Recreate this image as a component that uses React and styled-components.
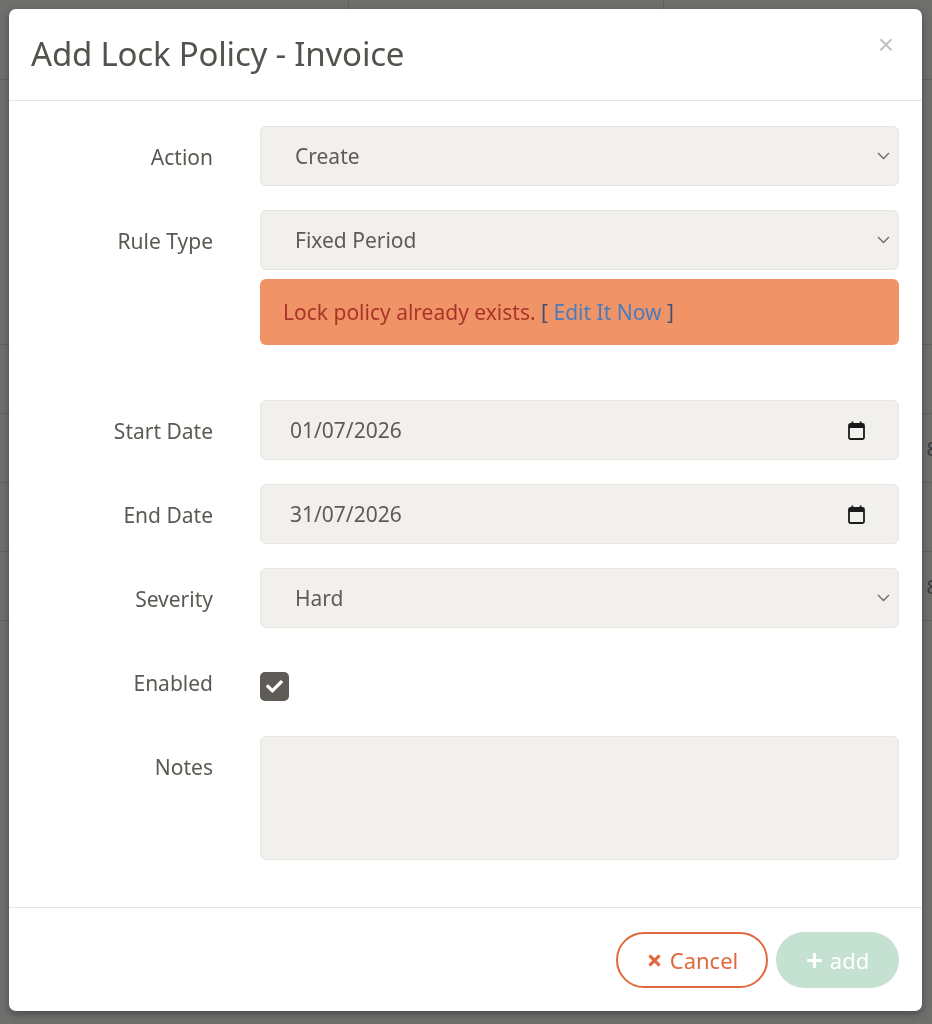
import styled, { createGlobalStyle } from "styled-components";
import { FaCheck, FaTimes, FaPlus } from "react-icons/fa";

const GlobalStyle = createGlobalStyle`
  html, body {
    margin: 0;
    padding: 0;
    background: #6f6f6e;
    font-family: "Noto Sans", "Lato", sans-serif;
  }
  * { box-sizing: border-box; }
`;

const Chevron = () => (
  <svg width="13" height="8" viewBox="0 0 13 8" fill="none">
    <polyline points="1,1 6.5,6.5 12,1" stroke="#6b6864" strokeWidth="1.3" />
  </svg>
);

const CalendarIcon = () => (
  <svg width="17" height="19" viewBox="0 0 17 19" fill="none">
    <rect x="1" y="3" width="15" height="15" rx="1.5" stroke="#1a1a1a" strokeWidth="1.8" />
    <rect x="1" y="3" width="15" height="4" fill="#1a1a1a" />
    <rect x="3.5" y="0.5" width="1.8" height="4" fill="#1a1a1a" />
    <rect x="11.7" y="0.5" width="1.8" height="4" fill="#1a1a1a" />
  </svg>
);

const App = () => {
  return (
    <>
      <GlobalStyle />
      <Page>
        <TopBar>
          <Brand>Demo Fitness Studio</Brand>
          <NavCell />
          <NavCell />
        </TopBar>
        <Table>
          {[0, 1, 2, 3, 4].map((i) => (
            <TableRow key={i}>{i === 1 || i === 3 ? "8" : ""}</TableRow>
          ))}
        </Table>
      </Page>

      <Overlay>
        <Modal>
          <Header>
            <Title>Add Lock Policy - Invoice</Title>
            <Close>×</Close>
          </Header>

          <Body>
            <Row>
              <Label>Action</Label>
              <Field>
                <span>Create</span>
                <Chevron />
              </Field>
            </Row>

            <Row spaced>
              <Label>Rule Type</Label>
              <div>
                <Field>
                  <span>Fixed Period</span>
                  <Chevron />
                </Field>
                <Alert>
                  Lock policy already exists. <Bracket>[</Bracket>{" "}
                  <AlertLink>Edit It Now</AlertLink> <Bracket>]</Bracket>
                </Alert>
              </div>
            </Row>

            <Row>
              <Label>Start Date</Label>
              <Field date>
                <span>01/07/2026</span>
                <CalendarIcon />
              </Field>
            </Row>

            <Row>
              <Label>End Date</Label>
              <Field date>
                <span>31/07/2026</span>
                <CalendarIcon />
              </Field>
            </Row>

            <Row>
              <Label>Severity</Label>
              <Field>
                <span>Hard</span>
                <Chevron />
              </Field>
            </Row>

            <Row>
              <Label>Enabled</Label>
              <CheckCell>
                <Checkbox>
                  <FaCheck size={17} />
                </Checkbox>
              </CheckCell>
            </Row>

            <Row>
              <Label>Notes</Label>
              <Notes />
            </Row>
          </Body>

          <Footer>
            <CancelButton>
              <FaTimes size={17} />
              Cancel
            </CancelButton>
            <AddButton>
              <FaPlus size={17} />
              add
            </AddButton>
          </Footer>
        </Modal>
      </Overlay>
    </>
  );
};

const Page = styled.div`
  width: 100%;
  height: 1024px;
  overflow: hidden;
`;

const TopBar = styled.div`
  display: flex;
  height: 80px;
  border-bottom: 1px solid #616160;
`;

const Brand = styled.div`
  flex-shrink: 0;
  width: 348px;
  height: 10px;
  overflow: hidden;
  padding: 0 0 0 15px;
  font-size: 38px;
  font-weight: 700;
  color: #3b3b3a;
  line-height: 54px;
`;

const NavCell = styled.div`
  flex-shrink: 0;
  width: 315px;
  border-left: 1px solid #626261;
`;

const Table = styled.div`
  margin-top: 264px;
  display: flex;
  flex-direction: column;
`;

const TableRow = styled.div`
  height: 69px;
  border-top: 1px solid #626261;
  display: flex;
  align-items: center;
  justify-content: flex-end;
  margin-right: -6px;
  font-size: 20px;
  color: #3b3b3a;
`;

const Overlay = styled.div`
  position: fixed;
  inset: 0;
  padding: 9px 10px 13px 9px;
`;

const Modal = styled.div`
  width: 913px;
  height: 1002px;
  background: #ffffff;
  border-radius: 7px;
  box-shadow: 0 3px 9px rgba(0, 0, 0, 0.35);
  display: flex;
  flex-direction: column;
`;

const Header = styled.div`
  height: 92px;
  border-bottom: 1px solid #e5e5e5;
  display: flex;
  align-items: center;
  justify-content: space-between;
  padding: 0 28px 0 22px;
`;

const Title = styled.h4`
  margin: 0 0 2px;
  font-size: 33px;
  font-weight: 400;
  color: #55524d;
  letter-spacing: -0.2px;
`;

const Close = styled.div`
  font-size: 28px;
  color: #c2c2c2;
  line-height: 1;
  margin-bottom: 20px;
  font-family: "Liberation Sans", sans-serif;
`;

const Body = styled.div`
  padding: 25px 23px 47px 0;
  display: flex;
  flex-direction: column;
  gap: 24px;
  border-bottom: 1px solid #e5e5e5;
`;

const Row = styled.div`
  display: grid;
  grid-template-columns: 204px 639px;
  column-gap: 47px;
  align-items: start;
  margin-bottom: ${(props) => (props.spaced ? "31px" : "0")};
`;

const Label = styled.div`
  text-align: right;
  height: 60px;
  padding-top: 1px;
  line-height: 60px;
  font-size: 21px;
  color: #5c5852;
`;

const Field = styled.div`
  height: 60px;
  background: #f1f0ed;
  border: 1px solid #e8e6e2;
  border-radius: 6px;
  display: flex;
  align-items: center;
  justify-content: space-between;
  padding: ${(props) => (props.date ? "0 33px 0 29px" : "0 8px 0 34px")};
  font-size: 21px;
  color: #5e5b56;
`;

const Alert = styled.div`
  margin-top: 9px;
  height: 66px;
  line-height: 66px;
  background: #f09468;
  border-radius: 6px;
  padding: 0 23px;
  font-size: 21px;
  color: #a9352a;
`;

const Bracket = styled.span`
  color: #3f5273;
`;

const AlertLink = styled.span`
  color: #4a7cbc;
`;

const CheckCell = styled.div`
  padding-top: 20px;
`;

const Checkbox = styled.div`
  width: 29px;
  height: 29px;
  border-radius: 5px;
  background: #5f5b56;
  color: #ffffff;
  display: flex;
  align-items: center;
  justify-content: center;
`;

const Notes = styled.div`
  height: 124px;
  background: #f1f0ed;
  border: 1px solid #e8e6e2;
  border-radius: 6px;
`;

const Footer = styled.div`
  display: flex;
  justify-content: flex-end;
  gap: 8px;
  padding: 24px 23px 0 0;
`;

const PillButton = styled.div`
  height: 56px;
  border-radius: 28px;
  display: flex;
  align-items: center;
  justify-content: center;
  gap: 7px;
  font-size: 22px;
`;

const CancelButton = styled(PillButton)`
  width: 152px;
  border: 2px solid #e0693d;
  color: #e0693d;
`;

const AddButton = styled(PillButton)`
  width: 123px;
  background: #c5e1d1;
  color: #ffffff;
`;

export default App;
